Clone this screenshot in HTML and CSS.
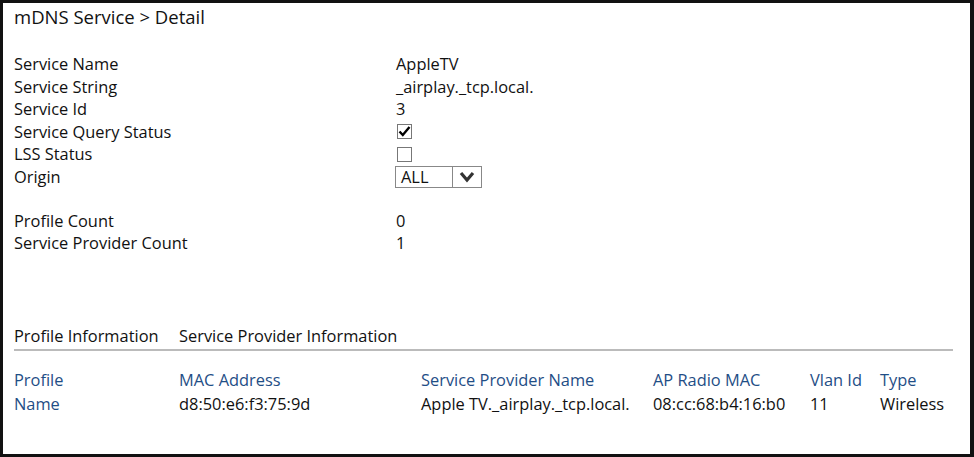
FILE: index.html
```html
<!DOCTYPE html>
<html>
<head>
<meta charset="utf-8">
<link rel="stylesheet" href="styles.css">
</head>
<body>
<div class="frame">
  <div class="title">mDNS Service &gt; Detail</div>
  <div class="fields">
    <div class="row"><span class="label">Service Name</span><span class="value">AppleTV</span></div>
    <div class="row"><span class="label">Service String</span><span class="value">_airplay._tcp.local.</span></div>
    <div class="row"><span class="label">Service Id</span><span class="value">3</span></div>
    <div class="row"><span class="label">Service Query Status</span><span class="value"><span class="check checked"><svg width="13" height="13" viewBox="0 0 13 13"><path d="M1.5 6.5 L4.8 10 L11.5 2" fill="none" stroke="#000" stroke-width="2.4"/></svg></span></span></div>
    <div class="row"><span class="label">LSS Status</span><span class="value"><span class="check"></span></span></div>
    <div class="row"><span class="label">Origin</span><span class="value"><span class="select"><span class="sel-text">ALL</span><span class="sel-btn"><svg width="16" height="12" viewBox="0 0 16 12"><path d="M2 2 L8 9 L14 2" fill="none" stroke="#333" stroke-width="3.2"/></svg></span></span></span></div>
  </div>
  <div class="fields counts">
    <div class="row"><span class="label">Profile Count</span><span class="value">0</span></div>
    <div class="row"><span class="label">Service Provider Count</span><span class="value">1</span></div>
  </div>
  <div class="tabs">
    <span class="tab tab-profile">Profile Information</span>
    <span class="tab">Service Provider Information</span>
  </div>
  <div class="table">
    <div class="trow head">
      <span class="c1">Profile</span><span class="c2">MAC Address</span><span class="c3">Service Provider Name</span><span class="c4">AP Radio MAC</span><span class="c5">Vlan Id</span><span class="c6">Type</span>
    </div>
    <div class="trow">
      <span class="c1 blue">Name</span><span class="c2">d8:50:e6:f3:75:9d</span><span class="c3">Apple TV._airplay._tcp.local.</span><span class="c4">08:cc:68:b4:16:b0</span><span class="c5">11</span><span class="c6">Wireless</span>
    </div>
  </div>
</div>
</body>
</html>
```
FILE: styles.css
```css
html, body {
  margin: 0;
  padding: 0;
  background: #fff;
}
.frame {
  box-sizing: border-box;
  width: 974px;
  height: 457px;
  border: 3px solid #111;
  border-right-width: 4px;
  padding: 0 0 0 11px;
  font-family: "Open Sans", "Noto Sans", sans-serif;
  font-size: 16.4px;
  color: #111;
}
.title {
  font-size: 18.5px;
  line-height: 24px;
  margin-top: 2px;
}
.fields {
  margin-top: 24px;
}
.row {
  display: flex;
  height: 22.5px;
  line-height: 22px;
  align-items: center;
  white-space: nowrap;
}
.label {
  width: 382px;
}
.value {
  display: flex;
  align-items: center;
}
.check {
  display: inline-flex;
  align-items: center;
  justify-content: center;
  box-sizing: border-box;
  width: 15px;
  height: 15px;
  border: 1px solid #777;
  margin-left: 1px;
}
.select {
  display: inline-flex;
  box-sizing: border-box;
  height: 22px;
  width: 87px;
  border: 1px solid #888;
  margin-left: -1px;
}
.sel-text {
  width: 57px;
  padding-left: 5px;
  box-sizing: border-box;
  border-right: 1px solid #888;
  line-height: 20px;
}
.sel-btn {
  flex: 1;
  display: flex;
  align-items: center;
  justify-content: center;
}
.counts {
  margin-top: 21.5px;
}
.tabs {
  margin-top: 70px;
  width: 939px;
  border-bottom: 2px solid #bbb;
  padding-bottom: 2px;
  line-height: 22px;
  display: flex;
  white-space: nowrap;
}
.tab-profile {
  width: 165px;
}
.table {
  margin-top: 17px;
}
.trow {
  display: flex;
  line-height: 24px;
  white-space: nowrap;
}
.head {
  color: #1f4e86;
}
.blue {
  color: #1f4e86;
}
.c1 { width: 165px; }
.c2 { width: 242px; }
.c3 { width: 232px; }
.c4 { width: 157px; }
.c5 { width: 70px; }
.c6 { width: 70px; }
```
